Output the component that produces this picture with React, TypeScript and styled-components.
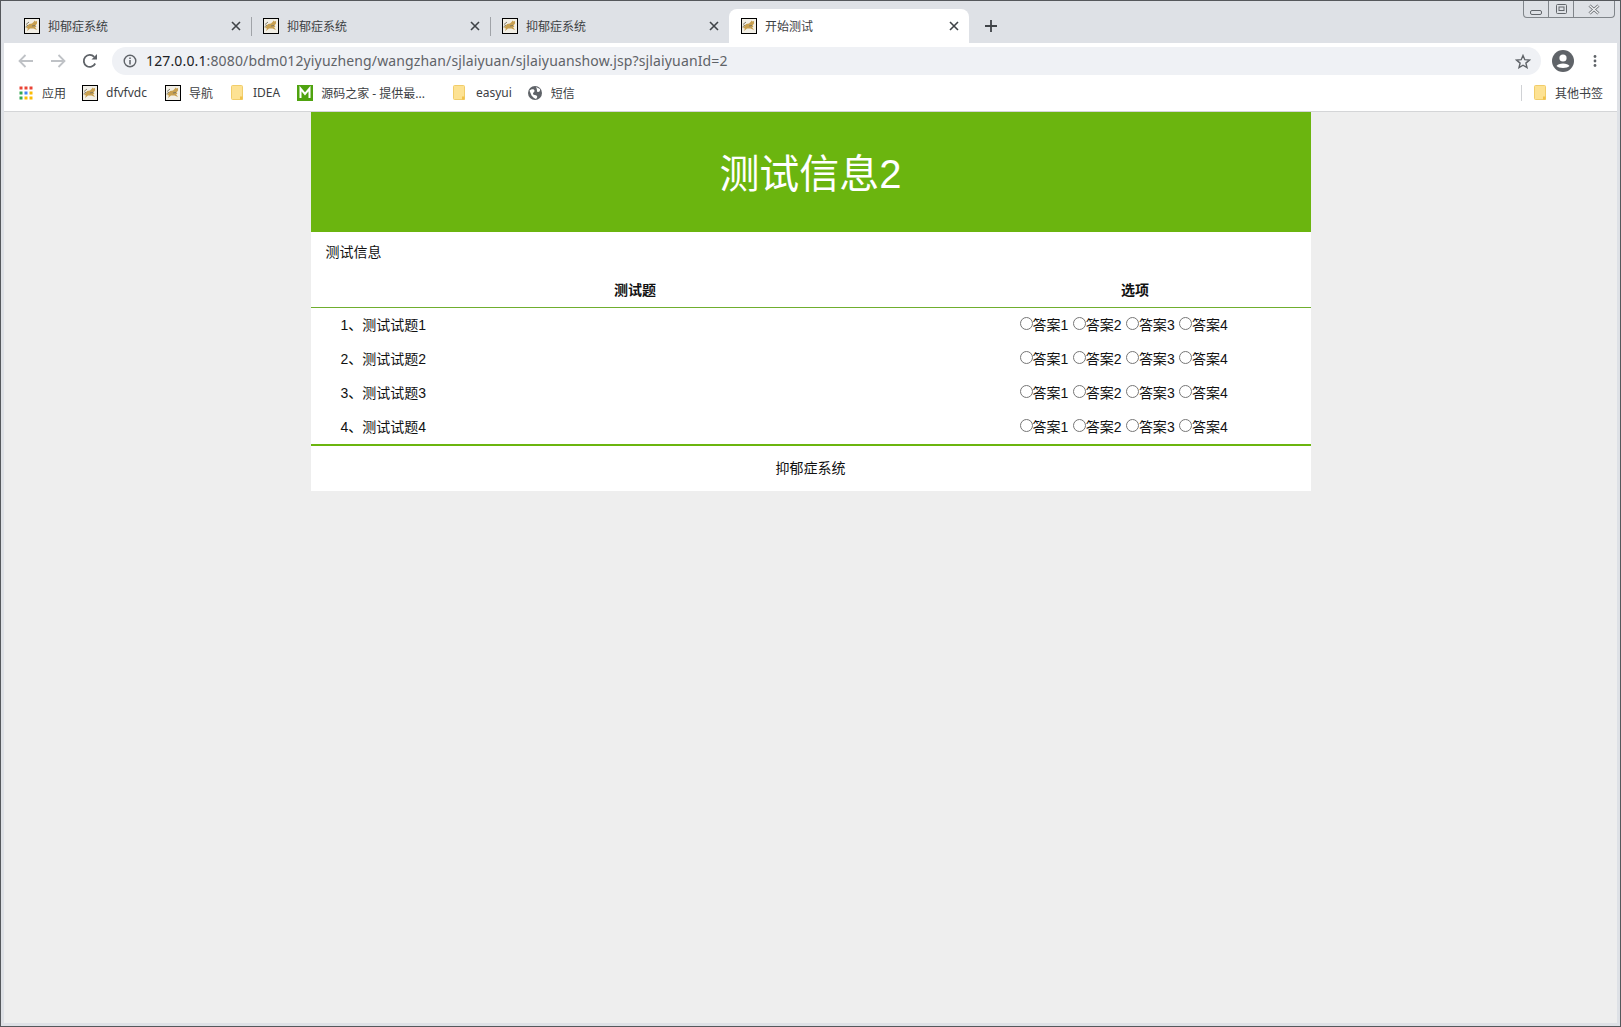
import { createGlobalStyle, styled } from 'styled-components';

const FONT = '"Liberation Sans", "Noto Sans CJK SC", sans-serif';
const UI_FONT = '"Noto Sans", "Noto Sans CJK SC", sans-serif';
const GREEN = '#6bb50f';

const GlobalStyle = createGlobalStyle`
  html, body {
    margin: 0;
    padding: 0;
    background: #eeeeee;
  }
  * {
    box-sizing: border-box;
  }
`;

const Window = styled.div`
  width: 1621px;
  height: 1027px;
  overflow: hidden;
  position: relative;
  display: flex;
  flex-direction: column;
  background: #dee1e6;
  border: 1px solid #55585c;
  padding: 0 3px 3px;
  font-family: ${FONT};
`;

const TabStrip = styled.div`
  height: 42px;
  flex: none;
  display: flex;
  align-items: flex-end;
  padding-left: 8px;
`;

const Tab = styled.div<{ $active?: boolean; $divider?: boolean }>`
  width: ${(p) => (p.$active ? '240px' : '239px')};
  height: 34px;
  flex: none;
  display: flex;
  align-items: center;
  padding: 0 10px 0 12px;
  position: relative;
  border-radius: 8px 8px 0 0;
  background: ${(p) => (p.$active ? '#ffffff' : 'transparent')};

  &::after {
    content: '';
    display: ${(p) => (p.$divider ? 'block' : 'none')};
    position: absolute;
    right: -1px;
    top: 8px;
    width: 1px;
    height: 19px;
    background: #a0a3a8;
  }
`;

const TabTitle = styled.span`
  flex: 1;
  margin-left: 8px;
  font-family: ${UI_FONT};
  font-size: 12px;
  color: #3c4043;
`;

const NewTab = styled.div`
  margin-left: 16px;
  height: 34px;
  display: flex;
  align-items: center;
`;

const WindowButtons = styled.div`
  position: absolute;
  top: 0;
  right: 5px;
  width: 92px;
  height: 17px;
  display: flex;
  border: 1px solid #80858a;
  border-top: none;
  border-radius: 0 0 4px 4px;
  background: #dee1e6;
`;

const WindowButton = styled.div<{ $wide?: boolean }>`
  width: ${(p) => (p.$wide ? '42px' : '25px')};
  display: flex;
  align-items: center;
  justify-content: center;

  & + & {
    border-left: 1px solid #80858a;
  }
`;

const Toolbar = styled.div`
  height: 36px;
  flex: none;
  background: #ffffff;
  display: flex;
  align-items: center;
  padding: 0 20px 0 6px;
`;

const NavIcon = styled.div`
  width: 32px;
  height: 28px;
  display: flex;
  align-items: center;
  justify-content: center;
  flex: none;
`;

const AddressBar = styled.div`
  flex: 1;
  height: 28px;
  margin: 0 11px 0 6px;
  border-radius: 14px;
  background: #eff1f5;
  display: flex;
  align-items: center;
  padding: 0 10px 0 11px;
  font-family: ${UI_FONT};
  font-size: 14px;
  letter-spacing: 0.14px;
`;

const UrlHost = styled.span`
  color: #202124;
  margin: 0 0 1px 9px;
`;

const UrlPath = styled.span`
  color: #5f6368;
  flex: 1;
  margin-bottom: 1px;
`;

const AvatarGroup = styled.div`
  display: flex;
  align-items: center;
  gap: 19px;
`;

const BookmarkBar = styled.div`
  height: 33px;
  flex: none;
  background: #ffffff;
  border-bottom: 1px solid #d4d5d7;
  display: flex;
  align-items: center;
  padding: 0 14px 5px 15px;
  font-family: ${UI_FONT};
  font-size: 12px;
  color: #3c4043;
`;

const Bookmark = styled.div<{ $gap: number; $iconGap?: number }>`
  display: flex;
  align-items: center;
  gap: ${(p) => p.$iconGap ?? 9}px;
  margin-right: ${(p) => p.$gap}px;
  white-space: nowrap;
`;

const BookmarkSpacer = styled.div`
  flex: 1;
`;

const BookmarkDivider = styled.div`
  width: 1px;
  height: 16px;
  background: #d0d2d5;
  margin-right: 12px;
`;

const PageArea = styled.div`
  flex: 1;
  display: flex;
  justify-content: center;
  align-items: flex-start;
  background: #eeeeee;
`;

const Main = styled.div`
  width: 1000px;
  background: #ffffff;
  color: #111111;
`;

const Banner = styled.h1`
  margin: 0;
  height: 120px;
  background: ${GREEN};
  color: #ffffff;
  font-size: 40px;
  font-weight: 400;
  line-height: 125px;
  text-align: center;
`;

const Caption = styled.div`
  padding: 0 15px;
  height: 40px;
  line-height: 40px;
  font-size: 14px;
`;

const QuizTable = styled.table`
  width: 100%;
  margin-bottom: 1px;
  border-collapse: collapse;
  table-layout: fixed;
  font-size: 14px;
`;

const HeadCell = styled.th<{ $width?: number }>`
  height: 35px;
  width: ${(p) => (p.$width ? `${p.$width}px` : 'auto')};
  font-size: 14px;
  font-weight: 700;
  text-align: center;
  border-bottom: 1px solid #6fae2e;
  padding: 0;
`;

const Row = styled.tr`
  height: 34px;
`;

const QuestionCell = styled.td`
  padding: 0 0 0 30px;
`;

const OptionCell = styled.td`
  padding: 0 0 0 60px;
  white-space: nowrap;
`;

const Option = styled.label`
  & + & {
    margin-left: 4.4px;
  }
`;

const Radio = styled.input`
  width: 13px;
  height: 13px;
  margin: 0;
  vertical-align: 0;
`;

const Footer = styled.div`
  border-top: 2px solid ${GREEN};
  height: 47px;
  line-height: 45px;
  text-align: center;
  font-size: 14px;
`;

const TomcatIcon = () => (
  <svg width="16" height="16" viewBox="0 0 16 16" style={{ flex: 'none' }}>
    <rect x="0.5" y="0.5" width="15" height="15" fill="#f2efe6" stroke="#000" />
    <path d="M2 10 L5 6 L8 5.5 L10 3.5 L10.5 2.5 L11.5 3.5 L13 3 L13 5.5 L11.5 7.5 L12.5 9 L11 9 L13 12 L9.5 10.5 L6 10.5 L3 13 L4 10.5 Z" fill="#c8a050" />
    <path d="M2 6.5 L5 4 M1.5 9 L4 7 M8 8 L11 7.5" stroke="#75705f" strokeWidth="0.9" />
  </svg>
);

const CloseIcon = () => (
  <svg width="10" height="10" viewBox="0 0 10 10">
    <path d="M1 1 L9 9 M9 1 L1 9" stroke="#3f4347" strokeWidth="1.6" />
  </svg>
);

const FolderIcon = () => (
  <svg width="12" height="15" viewBox="0 0 12 15" style={{ flex: 'none' }}>
    <path d="M0.5 1.5 Q0.5 0.5 1.5 0.5 H10.5 Q11.5 0.5 11.5 1.5 V14.5 H1.5 Q0.5 14.5 0.5 13.5 Z" fill="#fde293" stroke="#f1cd6a" />
    <rect x="9" y="11.5" width="2.5" height="3" fill="#f1c24a" />
  </svg>
);

const AppsIcon = () => {
  const colors = ['#ea4335', '#ea4335', '#ea4335', '#34a853', '#4285f4', '#fbbc05', '#34a853', '#fbbc05', '#fbbc05'];
  return (
    <svg width="14" height="14" viewBox="0 0 14 14" style={{ flex: 'none' }}>
      {colors.map((c, i) => (
        <rect key={i} x={(i % 3) * 5 + 0.5} y={Math.floor(i / 3) * 5 + 0.5} width="3" height="3" fill={c} />
      ))}
    </svg>
  );
};

const TABS = ['抑郁症系统', '抑郁症系统', '抑郁症系统'];
const QUESTIONS = [1, 2, 3, 4];
const ANSWERS = [1, 2, 3, 4];

export default function App() {
  return (
    <Window>
      <GlobalStyle />
      <TabStrip>
        {TABS.map((t, i) => (
          <Tab key={i} $divider={i < 2}>
            <TomcatIcon />
            <TabTitle>{t}</TabTitle>
            <CloseIcon />
          </Tab>
        ))}
        <Tab $active>
          <TomcatIcon />
          <TabTitle>开始测试</TabTitle>
          <CloseIcon />
        </Tab>
        <NewTab>
          <svg width="12" height="12" viewBox="0 0 12 12">
            <path d="M6 0 V12 M0 6 H12" stroke="#3f4347" strokeWidth="1.8" />
          </svg>
        </NewTab>
      </TabStrip>
      <WindowButtons>
        <WindowButton>
          <svg width="12" height="14" viewBox="0 0 12 14">
            <rect x="0.5" y="8.5" width="11" height="4" rx="1.5" fill="none" stroke="#62666b" />
          </svg>
        </WindowButton>
        <WindowButton>
          <svg width="11" height="10" viewBox="0 0 11 10">
            <rect x="0.5" y="0.5" width="10" height="9" rx="1" fill="none" stroke="#62666b" />
            <rect x="3" y="3" width="5" height="3.5" fill="none" stroke="#62666b" />
          </svg>
        </WindowButton>
        <WindowButton $wide>
          <svg width="12" height="11" viewBox="0 0 12 11">
            <path d="M1.5 1.5 L10.5 9.5 M10.5 1.5 L1.5 9.5" stroke="#62666b" strokeWidth="3" />
            <path d="M1.5 1.5 L10.5 9.5 M10.5 1.5 L1.5 9.5" stroke="#f2f3f5" strokeWidth="1.4" />
          </svg>
        </WindowButton>
      </WindowButtons>
      <Toolbar>
        <NavIcon>
          <svg width="16" height="14" viewBox="0 0 16 14">
            <path d="M15 7 H2 M7.5 1 L1.5 7 L7.5 13" fill="none" stroke="#bfc2c6" strokeWidth="1.8" />
          </svg>
        </NavIcon>
        <NavIcon>
          <svg width="16" height="14" viewBox="0 0 16 14">
            <path d="M1 7 H14 M8.5 1 L14.5 7 L8.5 13" fill="none" stroke="#bfc2c6" strokeWidth="1.8" />
          </svg>
        </NavIcon>
        <NavIcon>
          <svg width="16" height="16" viewBox="0 0 16 16">
            <path d="M13.2 10.5 A6 6 0 1 1 12.2 3.8" fill="none" stroke="#5f6368" strokeWidth="1.8" />
            <path d="M9.5 6.5 H15 V1 Z" fill="#5f6368" />
          </svg>
        </NavIcon>
        <AddressBar>
          <svg width="14" height="14" viewBox="0 0 14 14" style={{ flex: 'none' }}>
            <circle cx="7" cy="7" r="5.8" fill="none" stroke="#5f6368" strokeWidth="1.4" />
            <path d="M7 6 V10.5 M7 3.4 V5" stroke="#5f6368" strokeWidth="1.5" />
          </svg>
          <UrlHost>127.0.0.1</UrlHost>
          <UrlPath>:8080/bdm012yiyuzheng/wangzhan/sjlaiyuan/sjlaiyuanshow.jsp?sjlaiyuanId=2</UrlPath>
          <svg width="16" height="15" viewBox="0 0 16 15">
            <path d="M8 1.5 L9.8 5.7 L14.4 6.1 L10.9 9.1 L12 13.6 L8 11.2 L4 13.6 L5.1 9.1 L1.6 6.1 L6.2 5.7 Z" fill="none" stroke="#5f6368" strokeWidth="1.4" />
          </svg>
        </AddressBar>
        <AvatarGroup>
          <svg width="22" height="22" viewBox="0 0 22 22">
            <circle cx="11" cy="11" r="11" fill="#5f6368" />
            <circle cx="11" cy="8" r="3.6" fill="#fff" />
            <path d="M4.5 16 C6 12.6 16 12.6 17.5 16 C15.5 18.6 6.5 18.6 4.5 16 Z" fill="#fff" />
          </svg>
          <svg width="4" height="14" viewBox="0 0 4 14">
            <circle cx="2" cy="2.5" r="1.4" fill="#5f6368" />
            <circle cx="2" cy="7" r="1.4" fill="#5f6368" />
            <circle cx="2" cy="11.5" r="1.4" fill="#5f6368" />
          </svg>
        </AvatarGroup>
      </Toolbar>
      <BookmarkBar>
        <Bookmark $gap={16}><AppsIcon />应用</Bookmark>
        <Bookmark $gap={18} $iconGap={8}><TomcatIcon />dfvfvdc</Bookmark>
        <Bookmark $gap={18} $iconGap={8}><TomcatIcon />导航</Bookmark>
        <Bookmark $gap={17} $iconGap={10}><FolderIcon />IDEA</Bookmark>
        <Bookmark $gap={28} $iconGap={8}>
          <svg width="16" height="16" viewBox="0 0 16 16" style={{ flex: 'none' }}>
            <rect width="16" height="16" fill="#4fa30f" />
            <path d="M3.5 13 V3.5 L8 9 L12.5 3.5 V13" fill="none" stroke="#fff" strokeWidth="2" />
          </svg>
          源码之家 - 提供最...
        </Bookmark>
        <Bookmark $gap={16} $iconGap={11}><FolderIcon />easyui</Bookmark>
        <Bookmark $gap={0}>
          <svg width="14" height="14" viewBox="0 0 14 14" style={{ flex: 'none' }}>
            <circle cx="7" cy="7" r="7" fill="#5f6368" />
            <path d="M1.5 4.5 C4 2.5 6 3 6.5 4.5 C7 6 4.5 6.5 5 8 C5.5 9.5 8 8.5 9 10 C9.5 11 9 12 8 13 C5.5 12 5 11 3.5 9.5 C3 8 2 6 1.5 4.5 Z M8 1 L12 3 C12.5 5 11 6.5 9.5 6 C8.5 5 9.5 3.5 8 1 Z" fill="#fff" />
          </svg>
          短信
        </Bookmark>
        <BookmarkSpacer />
        <BookmarkDivider />
        <Bookmark $gap={0}><FolderIcon />其他书签</Bookmark>
      </BookmarkBar>
      <PageArea>
        <Main>
          <Banner>测试信息2</Banner>
          <Caption>测试信息</Caption>
          <QuizTable>
            <thead>
              <tr>
                <HeadCell $width={649}>测试题</HeadCell>
                <HeadCell>选项</HeadCell>
              </tr>
            </thead>
            <tbody>
              {QUESTIONS.map((q) => (
                <Row key={q}>
                  <QuestionCell>{q}、测试试题{q}</QuestionCell>
                  <OptionCell>
                    {ANSWERS.map((a) => (
                      <Option key={a}>
                        <Radio type="radio" name={`q${q}`} />答案{a}
                      </Option>
                    ))}
                  </OptionCell>
                </Row>
              ))}
            </tbody>
          </QuizTable>
          <Footer>抑郁症系统</Footer>
        </Main>
      </PageArea>
    </Window>
  );
}
